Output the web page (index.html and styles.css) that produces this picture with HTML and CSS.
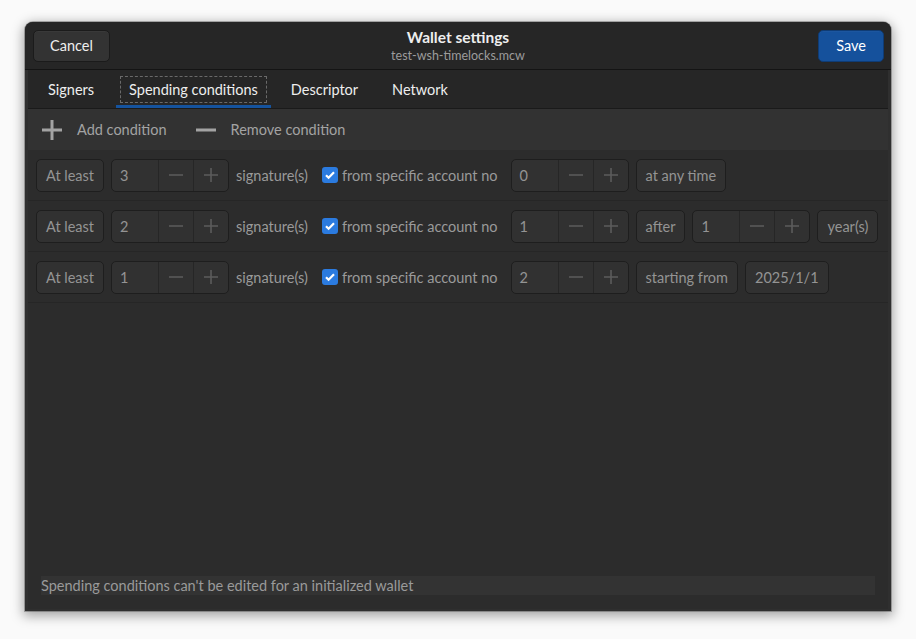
FILE: index.html
```html
<!DOCTYPE html>
<html>
<head>
<meta charset="utf-8">
<link rel="stylesheet" href="styles.css">
</head>
<body>
<div class="window">
  <header class="headerbar">
    <button class="hb-btn">Cancel</button>
    <div class="title-box">
      <div class="title">Wallet settings</div>
      <div class="subtitle">test-wsh-timelocks.mcw</div>
    </div>
    <button class="hb-btn suggested">Save</button>
  </header>
  <div class="frame">
    <nav class="tabs">
      <div class="tab">Signers</div>
      <div class="tab active"><span class="focus">Spending conditions</span></div>
      <div class="tab">Descriptor</div>
      <div class="tab">Network</div>
    </nav>
    <div class="page">
      <div class="toolbar">
        <div class="tool">
          <svg width="22" height="22" viewBox="0 0 22 22"><path d="M11 1v20M1 11h20" stroke="#a3a3a3" stroke-width="3" fill="none"/></svg>
          <span>Add condition</span>
        </div>
        <div class="tool">
          <svg width="22" height="22" viewBox="0 0 22 22"><path d="M1 11h20" stroke="#a3a3a3" stroke-width="3" fill="none"/></svg>
          <span>Remove condition</span>
        </div>
      </div>
      <div class="rows">
        <div class="row">
          <div class="btn">At least</div>
          <div class="spin"><div class="val">3</div><div class="sb"><svg width="16" height="16" viewBox="0 0 16 16"><path d="M1 8h14" class="ic"/></svg></div><div class="sb"><svg width="16" height="16" viewBox="0 0 16 16"><path d="M1 8h14M8 1v14" class="ic"/></svg></div></div>
          <span class="lbl">signature(s)</span>
          <label class="check"><span class="box"><svg width="12" height="12" viewBox="0 0 12 12"><path d="M2 6.2l2.6 2.6L10 3.2" stroke="#fff" stroke-width="2.2" fill="none"/></svg></span><span class="lbl">from specific account no</span></label>
          <div class="spin"><div class="val">0</div><div class="sb"><svg width="16" height="16" viewBox="0 0 16 16"><path d="M1 8h14" class="ic"/></svg></div><div class="sb"><svg width="16" height="16" viewBox="0 0 16 16"><path d="M1 8h14M8 1v14" class="ic"/></svg></div></div>
          <div class="btn">at any time</div>
        </div>
        <div class="row">
          <div class="btn">At least</div>
          <div class="spin"><div class="val">2</div><div class="sb"><svg width="16" height="16" viewBox="0 0 16 16"><path d="M1 8h14" class="ic"/></svg></div><div class="sb"><svg width="16" height="16" viewBox="0 0 16 16"><path d="M1 8h14M8 1v14" class="ic"/></svg></div></div>
          <span class="lbl">signature(s)</span>
          <label class="check"><span class="box"><svg width="12" height="12" viewBox="0 0 12 12"><path d="M2 6.2l2.6 2.6L10 3.2" stroke="#fff" stroke-width="2.2" fill="none"/></svg></span><span class="lbl">from specific account no</span></label>
          <div class="spin"><div class="val">1</div><div class="sb"><svg width="16" height="16" viewBox="0 0 16 16"><path d="M1 8h14" class="ic"/></svg></div><div class="sb"><svg width="16" height="16" viewBox="0 0 16 16"><path d="M1 8h14M8 1v14" class="ic"/></svg></div></div>
          <div class="btn">after</div>
          <div class="spin"><div class="val">1</div><div class="sb"><svg width="16" height="16" viewBox="0 0 16 16"><path d="M1 8h14" class="ic"/></svg></div><div class="sb"><svg width="16" height="16" viewBox="0 0 16 16"><path d="M1 8h14M8 1v14" class="ic"/></svg></div></div>
          <div class="btn">year(s)</div>
        </div>
        <div class="row">
          <div class="btn">At least</div>
          <div class="spin"><div class="val">1</div><div class="sb"><svg width="16" height="16" viewBox="0 0 16 16"><path d="M1 8h14" class="ic"/></svg></div><div class="sb"><svg width="16" height="16" viewBox="0 0 16 16"><path d="M1 8h14M8 1v14" class="ic"/></svg></div></div>
          <span class="lbl">signature(s)</span>
          <label class="check"><span class="box"><svg width="12" height="12" viewBox="0 0 12 12"><path d="M2 6.2l2.6 2.6L10 3.2" stroke="#fff" stroke-width="2.2" fill="none"/></svg></span><span class="lbl">from specific account no</span></label>
          <div class="spin"><div class="val">2</div><div class="sb"><svg width="16" height="16" viewBox="0 0 16 16"><path d="M1 8h14" class="ic"/></svg></div><div class="sb"><svg width="16" height="16" viewBox="0 0 16 16"><path d="M1 8h14M8 1v14" class="ic"/></svg></div></div>
          <div class="btn">starting from</div>
          <div class="btn">2025/1/1</div>
        </div>
      </div>
      <div class="status">Spending conditions can't be edited for an initialized wallet</div>
    </div>
  </div>
</div>
</body>
</html>
```

FILE: styles.css
```css
* { box-sizing: border-box; }
html, body { margin: 0; }
body {
  background: #fafafa;
  padding: 22px 0 0 25px;
  font-family: Lato, "Noto Sans", sans-serif;
  font-size: 14.5px;
  height: 639px;
  overflow: hidden;
}
.window {
  width: 866px;
  height: 589px;
  border-radius: 8px 8px 0 0;
  background: #303030;
  box-shadow: 0 3px 12px 2px rgba(0,0,0,0.35), 0 0 0 1px rgba(0,0,0,0.25);
  display: flex;
  flex-direction: column;
  overflow: hidden;
}
.headerbar {
  height: 48px;
  flex: none;
  background: #262626;
  border-bottom: 1px solid #141414;
  display: flex;
  align-items: center;
  justify-content: space-between;
  padding: 0 7px 0 8px;
  position: relative;
}
.hb-btn {
  font: inherit;
  height: 32px;
  color: #eeeeee;
  background: #333333;
  border: 1px solid #1b1b1b;
  border-radius: 5px;
  padding: 0 16px;
  box-shadow: inset 0 1px rgba(255,255,255,0.03);
}
.hb-btn.suggested {
  background: #15519c;
  border-color: #0f3c75;
  color: #ffffff;
  padding: 0 17px;
}
.title-box {
  text-align: center;
  line-height: 1.2;
  position: absolute;
  left: 0; right: 0;
  top: 6px;
  pointer-events: none;
}
.title { color: #eeeeee; font-weight: bold; font-size: 15.5px; }
.subtitle { color: #9c9c9c; font-size: 12.5px; margin-top: 1px; }
.frame {
  flex: 1;
  padding: 0 3px 2px 3px;
  display: flex;
  flex-direction: column;
  background: #2f2f2f;
}
.tabs {
  height: 39px;
  flex: none;
  background: #262626;
  border-bottom: 1px solid #1a1a1a;
  display: flex;
  padding-left: 3px;
  align-items: stretch;
}
.tab {
  color: #eeeeee;
  padding: 0 17px;
  display: flex;
  align-items: center;
  position: relative;
}
.tab.active { margin: 0 3px 0 5px; padding: 0 4px; }
.tab.active::after {
  content: "";
  position: absolute;
  left: 0; right: 0; bottom: 0;
  height: 3px;
  background: #15539e;
}
.tab .focus {
  border: 1px dashed #6a6a6a;
  padding: 4px 8px;
  margin-top: 1px;
}
.page {
  flex: 1;
  background: #2c2c2c;
  display: flex;
  flex-direction: column;
}
.toolbar {
  height: 41px;
  background: #323232;
  display: flex;
  align-items: center;
  padding-left: 13px;
  gap: 28px;
  color: #a3a3a3;
}
.tool { display: flex; align-items: center; gap: 14px; }
.rows { flex: 1; }
.row {
  display: flex;
  align-items: center;
  gap: 7px;
  height: 51px;
  padding-left: 8px;
  border-bottom: 1px solid #262626;
}
.btn, .spin {
  height: 33px;
  border: 1px solid #1e1e1e;
  border-radius: 5px;
  background: #313131;
  color: #949494;
}
.btn {
  display: flex;
  align-items: center;
  padding: 0 9px;
}
.spin { display: flex; width: 118px; overflow: hidden; }
.spin .val {
  width: 46px;
  padding-left: 8px;
  display: flex;
  align-items: center;
}
.spin .sb {
  flex: 1;
  border-left: 1px solid #262626;
  display: flex;
  align-items: center;
  justify-content: center;
}
.ic { stroke: #5c5c5c; stroke-width: 1.6; fill: none; }
.lbl { color: #9a9a9a; }
.check { display: flex; align-items: center; gap: 4px; margin-left: 7px; margin-right: 6px; }
.box {
  width: 16px; height: 16px;
  border-radius: 3px;
  background: #2b7be0;
  display: flex; align-items: center; justify-content: center;
}
.status {
  margin: 0 13px 14px 13px;
  height: 19px;
  background: #333333;
  color: #9a9a9a;
  display: flex;
  align-items: center;
}
```
